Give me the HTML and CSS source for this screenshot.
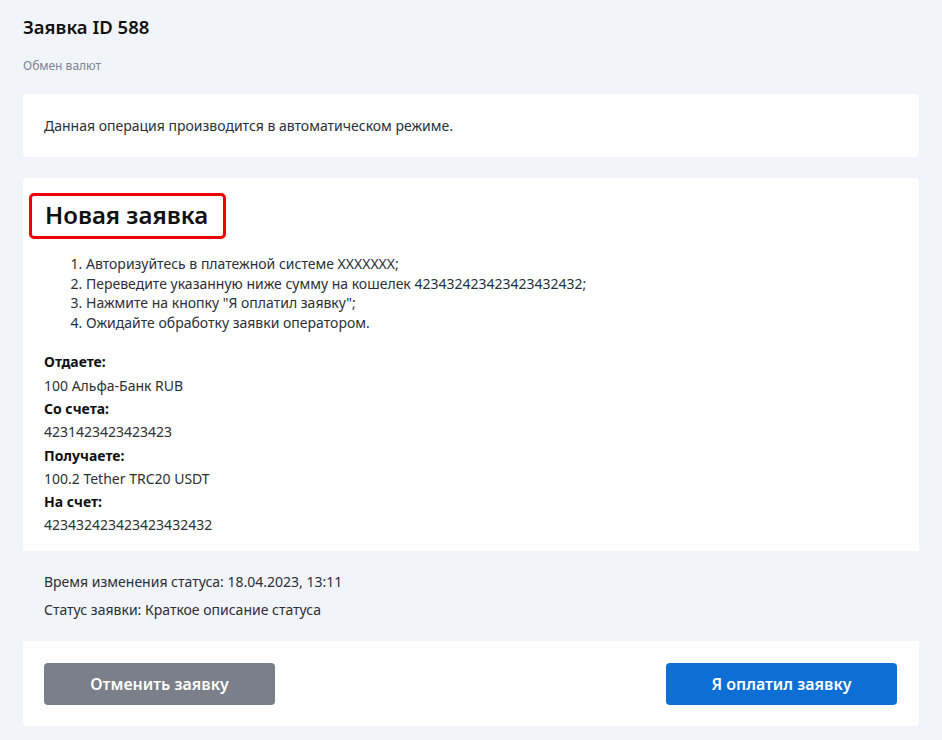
FILE: index.html
```html
<!DOCTYPE html>
<html lang="ru">
<head>
<meta charset="utf-8">
<title>Заявка ID 588</title>
<link rel="stylesheet" href="styles.css">
</head>
<body>
<div class="page">
  <header class="page-head">
    <h1 class="page-title">Заявка ID 588</h1>
    <div class="crumb">Обмен валют</div>
  </header>

  <section class="card notice">
    Данная операция производится в автоматическом режиме.
  </section>

  <section class="card order">
    <div class="order-body">
      <h2 class="order-title">Новая заявка</h2>
      <ol class="steps">
        <li>Авторизуйтесь в платежной системе XXXXXXX;</li>
        <li>Переведите указанную ниже сумму на кошелек 423432423423423432432;</li>
        <li>Нажмите на кнопку "Я оплатил заявку";</li>
        <li>Ожидайте обработку заявки оператором.</li>
      </ol>
      <dl class="details">
        <dt>Отдаете:</dt>
        <dd>100 Альфа-Банк RUB</dd>
        <dt>Со счета:</dt>
        <dd>4231423423423423</dd>
        <dt>Получаете:</dt>
        <dd>100.2 Tether TRC20 USDT</dd>
        <dt>На счет:</dt>
        <dd>423432423423423432432</dd>
      </dl>
    </div>
    <div class="status">
      <p>Время изменения статуса: 18.04.2023, 13:11</p>
      <p>Статус заявки: Краткое описание статуса</p>
    </div>
    <div class="actions">
      <button class="btn btn-cancel">Отменить заявку</button>
      <button class="btn btn-primary">Я оплатил заявку</button>
    </div>
  </section>
</div>
</body>
</html>
```
FILE: styles.css
```css
* { box-sizing: border-box; }
html, body { margin: 0; padding: 0; }
body {
  background: #f1f4f9;
  font-family: "Noto Sans", "Lato", sans-serif;
  color: #2b2f36;
  font-size: 14px;
}
.page {
  width: 896px;
  margin-left: 23px;
  padding-top: 13px;
}
.page-head { margin-bottom: 20px; }
.page-title {
  margin: 0;
  font-size: 18.5px;
  font-weight: 600;
  color: #111;
  line-height: 28px;
}
.crumb {
  margin-top: 17px;
  font-size: 12px;
  color: #7c8595;
  line-height: 16px;
}
.card {
  background: #fff;
  border-radius: 4px;
}
.notice {
  padding: 21px 21px;
  line-height: 21px;
  color: #2b2f36;
  margin-bottom: 21px;
}
.order { overflow: hidden; }
.order-body { padding: 15px 21px 14px; }
.order-title {
  display: inline-block;
  margin: 0 0 0 -15px;
  padding: 4px 15px 6px 13px;
  border: 3px solid #ee0000;
  border-radius: 5px;
  font-size: 24px;
  font-weight: 600;
  line-height: 30px;
  color: #111;
}
.steps {
  margin: 15px 0 0;
  padding-left: 42px;
  line-height: 19.6px;
}
.details {
  margin: 18px 0 0;
  line-height: 23.3px;
}
.details dt { font-weight: 700; color: #111; }
.details dd { margin: 0; }
.status {
  background: #f1f4f9;
  padding: 17px 21px;
}
.status p { margin: 0; line-height: 28px; }
.actions {
  display: flex;
  justify-content: space-between;
  padding: 22px 22px 21px 21px;
}
.btn {
  width: 231px;
  height: 42px;
  border: 0;
  border-radius: 4px;
  color: #fff;
  font-family: inherit;
  font-size: 16px;
  font-weight: 600;
}
.btn-cancel { background: #7a7f8a; }
.btn-primary { background: #0d6fd6; }
```
